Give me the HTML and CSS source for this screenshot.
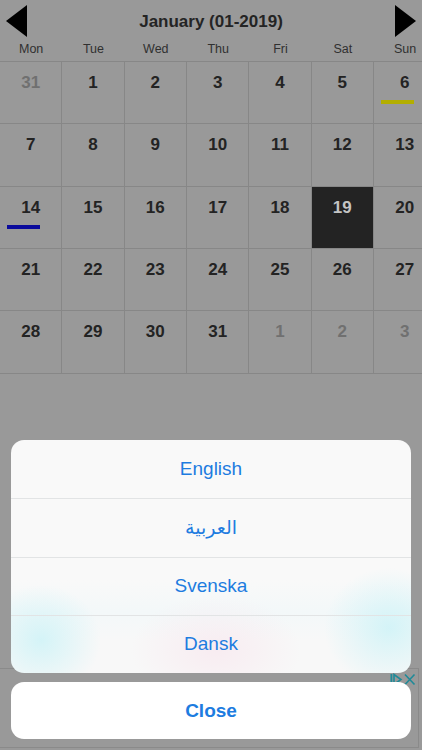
FILE: index.html
```html
<!DOCTYPE html>
<html>
<head>
<meta charset="utf-8">
<link rel="stylesheet" href="styles.css">
</head>
<body>
<div class="screen">
  <div class="header">
    <svg class="arrow" width="21" height="32" viewBox="0 0 21 32"><polygon points="21,0 21,32 0,16" fill="#000"/></svg>
    <div class="title">January (01-2019)</div>
    <svg class="arrow" width="21" height="32" viewBox="0 0 21 32"><polygon points="0,0 0,32 21,16" fill="#000"/></svg>
  </div>
  <div class="daynames">
    <div>Mon</div><div>Tue</div><div>Wed</div><div>Thu</div><div>Fri</div><div>Sat</div><div>Sun</div>
  </div>
  <div class="gridwrap">
    <div class="grid">
      <div class="cell muted"><span class="num">31</span></div>
      <div class="cell"><span class="num">1</span></div>
      <div class="cell"><span class="num">2</span></div>
      <div class="cell"><span class="num">3</span></div>
      <div class="cell"><span class="num">4</span></div>
      <div class="cell"><span class="num">5</span></div>
      <div class="cell"><span class="num">6</span><div class="bar yellow"></div></div>

      <div class="cell"><span class="num">7</span></div>
      <div class="cell"><span class="num">8</span></div>
      <div class="cell"><span class="num">9</span></div>
      <div class="cell"><span class="num">10</span></div>
      <div class="cell"><span class="num">11</span></div>
      <div class="cell"><span class="num">12</span></div>
      <div class="cell"><span class="num">13</span></div>

      <div class="cell"><span class="num">14</span><div class="bar blue"></div></div>
      <div class="cell"><span class="num">15</span></div>
      <div class="cell"><span class="num">16</span></div>
      <div class="cell"><span class="num">17</span></div>
      <div class="cell"><span class="num">18</span></div>
      <div class="cell selected"><span class="num">19</span></div>
      <div class="cell"><span class="num">20</span></div>

      <div class="cell"><span class="num">21</span></div>
      <div class="cell"><span class="num">22</span></div>
      <div class="cell"><span class="num">23</span></div>
      <div class="cell"><span class="num">24</span></div>
      <div class="cell"><span class="num">25</span></div>
      <div class="cell"><span class="num">26</span></div>
      <div class="cell"><span class="num">27</span></div>

      <div class="cell"><span class="num">28</span></div>
      <div class="cell"><span class="num">29</span></div>
      <div class="cell"><span class="num">30</span></div>
      <div class="cell"><span class="num">31</span></div>
      <div class="cell muted"><span class="num">1</span></div>
      <div class="cell muted"><span class="num">2</span></div>
      <div class="cell muted"><span class="num">3</span></div>
    </div>
  </div>

  <div class="adbanner">
    <svg class="adicon" width="26" height="13" viewBox="0 0 26 13">
      <rect x="0.5" y="1" width="1.8" height="11" fill="#1f8a98"/>
      <polygon points="4,1.5 4,11.5 11,6.5" fill="none" stroke="#1f8a98" stroke-width="1.6"/>
      <path d="M15 1.5 L24.5 11.5 M24.5 1.5 L15 11.5" stroke="#1f8a98" stroke-width="1.6" fill="none"/>
    </svg>
  </div>

  <div class="sheetwrap">
    <div class="sheet">
      <div class="option">English</div>
      <div class="option" dir="rtl">العربية</div>
      <div class="option">Svenska</div>
      <div class="option">Dansk</div>
    </div>
    <div class="closebtn">Close</div>
  </div>
</div>
</body>
</html>
```

FILE: styles.css
```css
html, body {
  margin: 0;
  padding: 0;
}
body {
  background: #999999;
  font-family: "Liberation Sans", Arial, sans-serif;
}
.screen {
  position: relative;
  width: 422px;
  height: 750px;
  overflow: hidden;
  background: #999999;
}
.header {
  height: 42px;
  display: flex;
  align-items: center;
  justify-content: space-between;
  padding: 0 6px;
}
.arrow {
  display: block;
}
.title {
  font-size: 17px;
  font-weight: bold;
  color: #242424;
  padding-top: 1px;
}
.daynames {
  display: grid;
  grid-template-columns: repeat(7, 62.33px);
  height: 19px;
  font-size: 12.5px;
  color: #303030;
  text-align: center;
  line-height: 15px;
}
.gridwrap {
  width: 422px;
  overflow: hidden;
}
.grid {
  display: grid;
  grid-template-columns: repeat(7, 62.33px);
  grid-auto-rows: 62.33px;
  border-top: 1px solid #878787;
  width: 436.3px;
}
.cell {
  box-sizing: border-box;
  border-right: 1px solid #878787;
  border-bottom: 1px solid #878787;
  padding-top: 11px;
  text-align: center;
  color: #232323;
}
.num {
  display: block;
  font-size: 17px;
  font-weight: bold;
  line-height: 20px;
}
.cell.muted {
  color: #707070;
}
.cell.selected {
  background: #232323;
  color: #c4c4c4;
}
.bar {
  width: 33px;
  height: 4px;
  margin: 7px 0 0 7px;
}
.bar.yellow {
  background: #b3ae00;
}
.bar.blue {
  background: #0b0b9c;
}
.adbanner {
  position: absolute;
  left: 0;
  top: 668px;
  width: 419px;
  height: 80px;
  box-sizing: border-box;
  border-top: 1px solid #8a8a8a;
  border-right: 1px solid #8a8a8a;
  border-bottom: 1px solid #8a8a8a;
}
.adicon {
  position: absolute;
  right: 2px;
  top: 4px;
}
.sheetwrap {
  position: absolute;
  left: 11px;
  top: 440px;
  width: 400px;
  display: flex;
  flex-direction: column;
  gap: 9px;
}
.sheet {
  border-radius: 13px;
  overflow: hidden;
  background:
    radial-gradient(ellipse 60px 55px at 30px 200px, rgba(200, 242, 247, 0.75), rgba(200, 242, 247, 0) 100%),
    radial-gradient(ellipse 65px 60px at 378px 188px, rgba(200, 242, 247, 0.75), rgba(200, 242, 247, 0) 100%),
    radial-gradient(ellipse 85px 55px at 205px 210px, rgba(248, 228, 236, 0.6), rgba(248, 228, 236, 0) 100%),
    linear-gradient(to bottom, #f9f9f9 0, #f9f9f9 140px, #f3f8f9 172px, #f8f8f8 200px, #f8f8f8 100%);
}
.option {
  height: 58.25px;
  box-sizing: border-box;
  display: flex;
  align-items: center;
  justify-content: center;
  font-family: "Liberation Sans", "DejaVu Sans", sans-serif;
  font-size: 19px;
  color: #1d7ce0;
  border-top: 1px solid #e2e4e5;
}
.option:first-child {
  border-top: none;
}
.closebtn {
  height: 57px;
  border-radius: 13px;
  background: #ffffff;
  display: flex;
  align-items: center;
  justify-content: center;
  font-size: 19px;
  font-weight: bold;
  color: #1d7ce0;
}
```
